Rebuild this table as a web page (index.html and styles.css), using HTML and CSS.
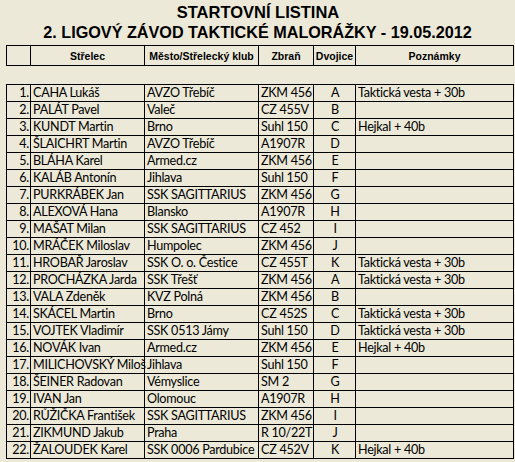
FILE: index.html
```html
<!DOCTYPE html>
<html lang="cs">
<head>
<meta charset="utf-8">
<title>Startovní listina</title>
<link rel="stylesheet" href="styles.css">
</head>
<body>
<div class="sheet">
  <h1 class="title1">STARTOVNÍ LISTINA</h1>
  <h2 class="title2">2. LIGOVÝ ZÁVOD TAKTICKÉ MALORÁŽKY - 19.05.2012</h2>
  <table class="grid head">
    <colgroup><col class="c1"><col class="c2"><col class="c3"><col class="c4"><col class="c5"><col class="c6"></colgroup>
    <tr><th></th><th>Střelec</th><th>Město/Střelecký klub</th><th>Zbraň</th><th>Dvojice</th><th>Poznámky</th></tr>
  </table>
  <table class="grid data">
    <colgroup><col class="c1"><col class="c2"><col class="c3"><col class="c4"><col class="c5"><col class="c6"></colgroup>
    <tr><td class="num">1.</td><td>CAHA Lukáš</td><td>AVZO Třebíč</td><td>ZKM 456</td><td class="pair">A</td><td>Taktická vesta + 30b</td></tr>
    <tr><td class="num">2.</td><td>PALÁT Pavel</td><td>Valeč</td><td>CZ 455V</td><td class="pair">B</td><td></td></tr>
    <tr><td class="num">3.</td><td>KUNDT Martin</td><td>Brno</td><td>Suhl 150</td><td class="pair">C</td><td>Hejkal + 40b</td></tr>
    <tr><td class="num">4.</td><td>ŠLAICHRT Martin</td><td>AVZO Třebíč</td><td>A1907R</td><td class="pair">D</td><td></td></tr>
    <tr><td class="num">5.</td><td>BLÁHA Karel</td><td>Armed.cz</td><td>ZKM 456</td><td class="pair">E</td><td></td></tr>
    <tr><td class="num">6.</td><td>KALÁB Antonín</td><td>Jihlava</td><td>Suhl 150</td><td class="pair">F</td><td></td></tr>
    <tr><td class="num">7.</td><td>PURKRÁBEK Jan</td><td>SSK SAGITTARIUS</td><td>ZKM 456</td><td class="pair">G</td><td></td></tr>
    <tr><td class="num">8.</td><td>ALEXOVÁ Hana</td><td>Blansko</td><td>A1907R</td><td class="pair">H</td><td></td></tr>
    <tr><td class="num">9.</td><td>MAŠAT Milan</td><td>SSK SAGITTARIUS</td><td>CZ 452</td><td class="pair">I</td><td></td></tr>
    <tr><td class="num">10.</td><td>MRÁČEK Miloslav</td><td>Humpolec</td><td>ZKM 456</td><td class="pair">J</td><td></td></tr>
    <tr><td class="num">11.</td><td>HROBAŘ Jaroslav</td><td>SSK O. o. Čestice</td><td>CZ 455T</td><td class="pair">K</td><td>Taktická vesta + 30b</td></tr>
    <tr><td class="num">12.</td><td>PROCHÁZKA Jarda</td><td>SSK Třešť</td><td>ZKM 456</td><td class="pair">A</td><td>Taktická vesta + 30b</td></tr>
    <tr><td class="num">13.</td><td>VALA Zdeněk</td><td>KVZ Polná</td><td>ZKM 456</td><td class="pair">B</td><td></td></tr>
    <tr><td class="num">14.</td><td>SKÁCEL Martin</td><td>Brno</td><td>CZ 452S</td><td class="pair">C</td><td>Taktická vesta + 30b</td></tr>
    <tr><td class="num">15.</td><td>VOJTEK Vladimír</td><td>SSK 0513 Jámy</td><td>Suhl 150</td><td class="pair">D</td><td>Taktická vesta + 30b</td></tr>
    <tr><td class="num">16.</td><td>NOVÁK Ivan</td><td>Armed.cz</td><td>ZKM 456</td><td class="pair">E</td><td>Hejkal + 40b</td></tr>
    <tr><td class="num">17.</td><td>MILICHOVSKÝ Miloš</td><td>Jihlava</td><td>Suhl 150</td><td class="pair">F</td><td></td></tr>
    <tr><td class="num">18.</td><td>ŠEINER Radovan</td><td>Vémyslice</td><td>SM 2</td><td class="pair">G</td><td></td></tr>
    <tr><td class="num">19.</td><td>IVAN Jan</td><td>Olomouc</td><td>A1907R</td><td class="pair">H</td><td></td></tr>
    <tr><td class="num">20.</td><td>RŮŽIČKA František</td><td>SSK SAGITTARIUS</td><td>ZKM 456</td><td class="pair">I</td><td></td></tr>
    <tr><td class="num">21.</td><td>ZIKMUND Jakub</td><td>Praha</td><td>R 10/22T</td><td class="pair">J</td><td></td></tr>
    <tr><td class="num">22.</td><td>ŽALOUDEK Karel</td><td>SSK 0006 Pardubice</td><td>CZ 452V</td><td class="pair">K</td><td>Hejkal + 40b</td></tr>
  </table>
</div>
</body>
</html>
```
FILE: styles.css
```css
html, body {
  margin: 0;
  padding: 0;
  background: #ece9d8;
}
.sheet {
  width: 515px;
  height: 462px;
  overflow: hidden;
  color: #000;
}
.title1 {
  margin: 0;
  padding: 2px 0 0 1px;
  height: 20px;
  text-align: center;
  font: bold 16.5px/20px "Liberation Sans", Arial, sans-serif;
}
.title2 {
  margin: 0;
  height: 23px;
  text-align: center;
  font: bold 16.2px/21px "Liberation Sans", Arial, sans-serif;
}
.grid {
  border-collapse: collapse;
  table-layout: fixed;
  margin-left: 6px;
  width: 508px;
}
.c1 { width: 24px; }
.c2 { width: 114px; }
.c3 { width: 114px; }
.c4 { width: 55px; }
.c5 { width: 42px; }
.c6 { width: 158px; }
.grid th, .grid td {
  border: 1px solid #000;
  padding: 0 2px;
  white-space: nowrap;
}
.head th {
  height: 19px;
  font: bold 10.5px/18px "Liberation Sans", Arial, sans-serif;
  text-align: center;
  padding: 0 1px;
  overflow: hidden;
}
.head {
  margin-bottom: 18px;
}
.data td {
  height: 16px;
  font: 12.6px/16px "Lato", sans-serif;
  letter-spacing: -0.28px;
  padding: 0 1px 0 2px;
  overflow: visible;
}
.data td.num {
  text-align: right;
  padding-right: 1px;
}
.data td.pair {
  text-align: center;
}
```
